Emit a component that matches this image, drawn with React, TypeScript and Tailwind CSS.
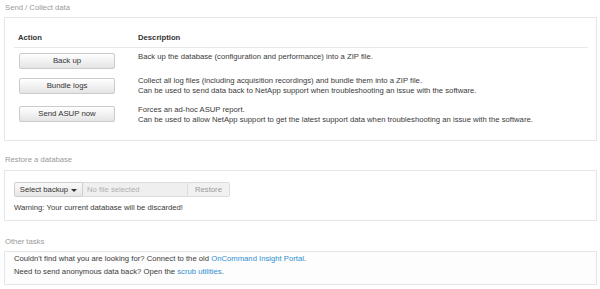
import React from 'react';

function ActionButton({ label }: { label: string }) {
  return (
    <button className="ml-[5px] h-[16px] w-[96px] shrink-0 rounded-[2px] border border-[#cbcbcb] bg-gradient-to-b from-[#ffffff] to-[#e4e4e4] text-[7.8px] leading-[14px] text-[#333]">
      {label}
    </button>
  );
}

function SectionTitle({ children }: { children: React.ReactNode }) {
  return <div className="pl-[5px] leading-[10px] text-[#9a9a9a]">{children}</div>;
}

export default function App() {
  return (
    <div
      className="h-[289px] w-[600px] overflow-hidden bg-white text-[7.7px] text-[#3a3a3a]"
      style={{ fontFamily: '"Liberation Sans", Arial, sans-serif' }}
    >
      {/* Send / Collect data */}
      <div className="pt-[3px]">
        <SectionTitle>Send / Collect data</SectionTitle>
      </div>
      <div className="ml-[4px] mt-[4px] h-[124px] w-[593px] border border-[#e6e6e6] pl-[9px] pr-[8px] pt-[15px]">
        <div className="flex border-b border-[#e8e8e8] pb-[4px] font-bold leading-[10px] text-[#333]">
          <div className="w-[124px] pl-[4px]">Action</div>
          <div>Description</div>
        </div>

        <div className="mt-[4px] flex items-start">
          <div className="w-[124px] pt-[1px]">
            <ActionButton label="Back up" />
          </div>
          <div className="leading-[10px]">
            Back up the database (configuration and performance) into a ZIP file.
          </div>
        </div>

        <div className="mt-[7px] flex items-start">
          <div className="w-[124px] pt-[2px]">
            <ActionButton label="Bundle logs" />
          </div>
          <div className="leading-[10px]">
            <div>Collect all log files (including acquisition recordings) and bundle them into a ZIP file.</div>
            <div>Can be used to send data back to NetApp support when troubleshooting an issue with the software.</div>
          </div>
        </div>

        <div className="mt-[9px] flex items-start">
          <div className="w-[124px] pt-[1px]">
            <ActionButton label="Send ASUP now" />
          </div>
          <div className="leading-[10px]">
            <div>Forces an ad-hoc ASUP report.</div>
            <div>Can be used to allow NetApp support to get the latest support data when troubleshooting an issue with the software.</div>
          </div>
        </div>
      </div>

      {/* Restore a database */}
      <div className="mt-[14px]">
        <SectionTitle>Restore a database</SectionTitle>
      </div>
      <div className="ml-[4px] mt-[5px] h-[51px] w-[593px] border border-[#e6e6e6] pl-[9px] pt-[11px]">
        <div className="flex h-[15px]">
          <button className="flex h-[15px] w-[69px] items-center justify-center gap-[3px] rounded-l-[2px] border border-[#cfcfcf] bg-gradient-to-b from-[#fafafa] to-[#e6e6e6] text-[7.7px] text-[#333]">
            Select backup
            <span className="mt-[1px] h-0 w-0 border-x-[3px] border-t-[3px] border-x-transparent border-t-[#333]" />
          </button>
          <div className="flex h-[15px] w-[104px] items-center border-y border-[#dcdcdc] bg-[#efefef] pl-[4px] text-[#b0b0b0]">
            No file selected
          </div>
          <button className="h-[15px] w-[43px] rounded-r-[2px] border border-[#dcdcdc] bg-[#f1f1f1] text-[7.7px] text-[#9a9a9a]">
            Restore
          </button>
        </div>
        <div className="mt-[6px] leading-[10px]">Warning: Your current database will be discarded!</div>
      </div>

      {/* Other tasks */}
      <div className="mt-[16px]">
        <SectionTitle>Other tasks</SectionTitle>
      </div>
      <div className="ml-[4px] mt-[4px] h-[34px] w-[593px] border border-[#e6e6e6] bg-[#fdfdfd] pl-[9px] pt-[2px] leading-[10px]">
        <div>
          Couldn't find what you are looking for? Connect to the old{' '}
          <a className="text-[#2f8fd0]">OnCommand Insight Portal</a>.
        </div>
        <div className="mt-[3px]">
          Need to send anonymous data back? Open the <a className="text-[#2f8fd0]">scrub utilities</a>.
        </div>
      </div>
    </div>
  );
}
